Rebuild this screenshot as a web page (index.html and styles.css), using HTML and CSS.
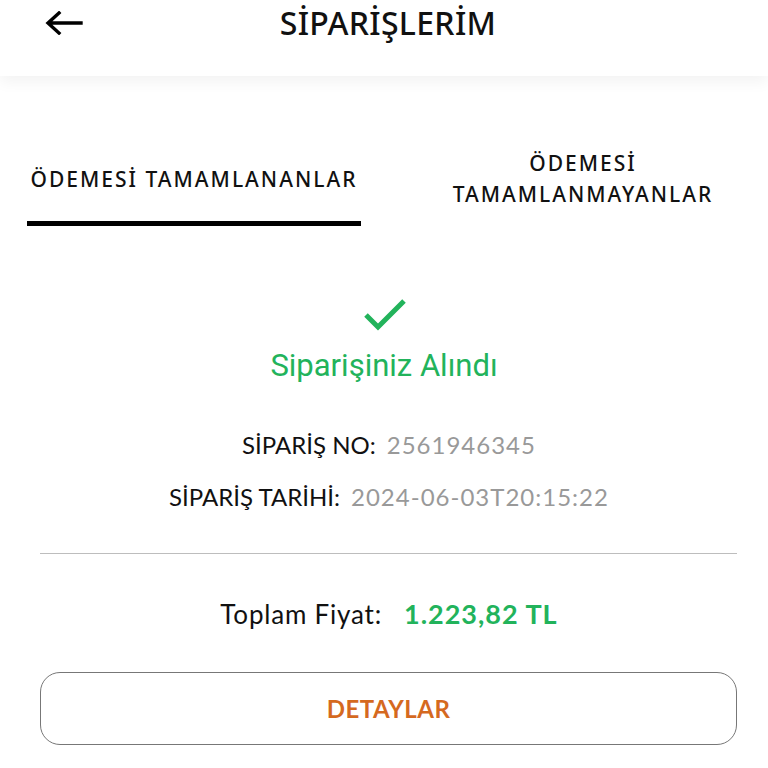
FILE: index.html
```html
<!DOCTYPE html>
<html lang="tr">
<head>
  <meta charset="UTF-8">
  <meta name="viewport" content="width=device-width, initial-scale=1.0">
  <title>Siparişlerim</title>
  <link rel="stylesheet" href="styles.css">
</head>
<body>
  <div class="header">
    <span class="back">
      <svg width="38" height="24" viewBox="0 0 38 24">
        <path d="M36 12H4M14 2L3 12l11 10" fill="none" stroke="#000" stroke-width="3.4" stroke-linecap="square"/>
      </svg>
    </span>
    <h1 class="title">SİPARİŞLERİM</h1>
  </div>

  <div class="tabs">
    <div class="tab active">ÖDEMESİ TAMAMLANANLAR</div>
    <div class="tab">ÖDEMESİ<br>TAMAMLANMAYANLAR</div>
  </div>

  <div class="order">
    <svg class="check" width="44" height="34" viewBox="0 0 44 34">
      <path d="M3 17l12 12L41 3" fill="none" stroke="#22b35b" stroke-width="5"/>
    </svg>
    <p class="ok">Siparişiniz Alındı</p>
    <p class="row"><span class="lbl">SİPARİŞ NO:</span><span class="val">2561946345</span></p>
    <p class="row"><span class="lbl">SİPARİŞ TARİHİ:</span><span class="val">2024-06-03T20:15:22</span></p>
  </div>

  <div class="line"></div>

  <p class="total">Toplam Fiyat:<b>1.223,82 TL</b></p>

  <div class="btn">DETAYLAR</div>
</body>
</html>
```

FILE: styles.css
```css
*{
  margin: 0;
  padding: 0;
  box-sizing: border-box;
}
body{
  background: #fff;
  font-family: "Noto Sans", sans-serif;
  color: #111;
}
.header{
  height: 76px;
  position: relative;
  display: flex;
  justify-content: center;
  align-items: flex-start;
  box-shadow: 0 6px 14px rgba(0,0,0,.05);
}
.back{
  position: absolute;
  left: 45px;
  top: 11px;
}
.title{
  font-size: 32px;
  font-weight: 500;
  line-height: 46px;
  margin-left: 8px;
  letter-spacing: .3px;
}
.tabs{
  display: flex;
  margin-top: 72px;
  padding-left: 27px;
}
.tab{
  font-size: 21px;
  font-weight: 500;
  line-height: 31px;
  letter-spacing: 2px;
  text-align: center;
  height: 78px;
}
.tab.active{
  width: 334px;
  padding-top: 16px;
  border-bottom: 5px solid #000;
}
.tab + .tab{
  flex: 1;
  padding-left: 37px;
}
.order{
  display: flex;
  flex-direction: column;
  align-items: center;
  margin-top: 72px;
}
.check{
  margin-left: 2px;
}
.ok{
  font-family: Roboto, sans-serif;
  color: #22b35b;
  font-size: 31px;
  line-height: 40px;
  margin-top: 14px;
}
.row{
  font-family: Lato, sans-serif;
  font-size: 24px;
  line-height: 52px;
  display: flex;
  gap: 11px;
  padding-left: 10px;
}
.order .ok + .row{
  margin-top: 33px;
}
.val{
  color: #999;
  letter-spacing: 1px;
}
.line{
  height: 1px;
  background: #bdbdbd;
  margin: 30px 31px 0 40px;
}
.total{
  font-family: Lato, sans-serif;
  font-size: 26px;
  letter-spacing: .8px;
  text-align: center;
  margin-top: 43px;
  padding-left: 10px;
  line-height: 34px;
}
.total b{
  color: #22b35b;
  margin-left: 22px;
  font-size: 27px;
  font-weight: 700;
  letter-spacing: 1px;
}
.btn{
  margin: 41px 31px 0 40px;
  height: 73px;
  border: 1px solid #777;
  border-radius: 20px;
  display: flex;
  align-items: center;
  justify-content: center;
  font-family: Lato, sans-serif;
  font-weight: 700;
  font-size: 24px;
  letter-spacing: .5px;
  color: #d5691f;
}
```
